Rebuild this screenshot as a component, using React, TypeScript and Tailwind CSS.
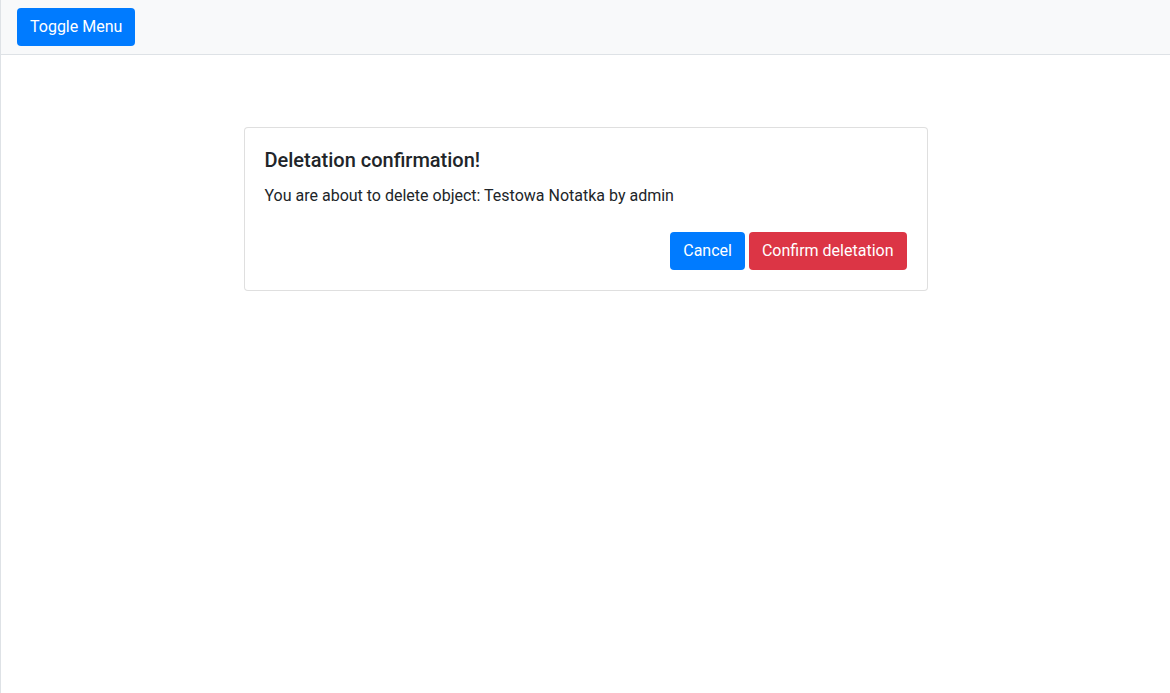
export default function App() {
  return (
    <div
      className="min-h-screen bg-white text-[#212529] text-base leading-6"
      style={{ fontFamily: "Roboto, 'Liberation Sans', sans-serif" }}
    >
      <div className="min-h-screen border-l border-[#dee2e6]">
        <nav className="flex items-center border-b border-[#dee2e6] bg-[#f8f9fa] px-4 py-2">
          <button className="h-[38px] rounded px-[13px] text-base leading-6 text-white bg-[#007bff]">
            Toggle Menu
          </button>
        </nav>

        <div className="pt-[72px]">
          <div className="mx-auto w-[684px] rounded border border-black/[.125] bg-white">
            <div className="p-5">
              <h5 className="mb-3 text-xl font-medium leading-[1.2]">
                Deletation confirmation!
              </h5>
              <p className="mb-4">
                You are about to delete object: Testowa Notatka by admin
              </p>
              <div className="pt-2 flex justify-end gap-1">
                <button className="h-[38px] rounded px-[13px] text-base leading-6 text-white bg-[#007bff]">
                  Cancel
                </button>
                <button className="h-[38px] rounded px-[13px] text-base leading-6 text-white bg-[#dc3545]">
                  Confirm deletation
                </button>
              </div>
            </div>
          </div>
        </div>
      </div>
    </div>
  );
}
